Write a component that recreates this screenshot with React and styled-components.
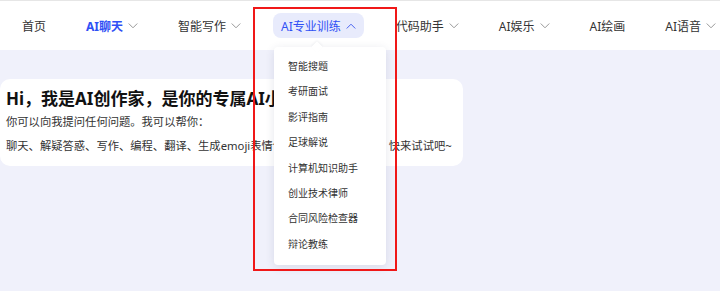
import React from "react";
import styled, { createGlobalStyle } from "styled-components";

const GlobalStyle = createGlobalStyle`
  html, body {
    margin: 0;
    padding: 0;
    background: #f0f1fb;
    font-family: "Noto Sans", "Noto Sans CJK SC", sans-serif;
    overflow: hidden;
  }
`;

const navItems = [
  { label: "首页" },
  { label: "AI聊天", arrow: true, current: true },
  { label: "智能写作", arrow: true },
  { label: "AI专业训练", arrow: true, open: true },
  { label: "代码助手", arrow: true },
  { label: "AI娱乐", arrow: true },
  { label: "AI绘画" },
  { label: "AI语音", arrow: true },
];

const menuItems = [
  "智能搜题",
  "考研面试",
  "影评指南",
  "足球解说",
  "计算机知识助手",
  "创业技术律师",
  "合同风险检查器",
  "辩论教练",
];

const Chevron = ({ up }) => (
  <svg width="10" height="6" viewBox="0 0 10 6" fill="none">
    <path
      d={up ? "M1 5.2 L5 1.2 L9 5.2" : "M1 0.8 L5 4.8 L9 0.8"}
      stroke="currentColor"
      strokeWidth="1"
      strokeLinecap="round"
      strokeLinejoin="round"
    />
  </svg>
);

const App = () => {
  return (
    <Page>
      <GlobalStyle />
      <Header>
        <Nav>
          {navItems.map((item) => (
            <NavItem key={item.label} $current={item.current} $open={item.open}>
              <span>{item.label}</span>
              {item.arrow && (
                <Arrow $open={item.open}>
                  <Chevron up={item.open} />
                </Arrow>
              )}
              {item.open && (
                <Dropdown>
                  {menuItems.map((m) => (
                    <MenuItem key={m}>{m}</MenuItem>
                  ))}
                </Dropdown>
              )}
            </NavItem>
          ))}
        </Nav>
      </Header>
      <Main>
        <Card>
          <Title>Hi，我是AI创作家，是你的专属AI小助手~</Title>
          <Sub>你可以向我提问任何问题。我可以帮你：</Sub>
          <Sub $gap>
            聊天、解疑答惑、写作、编程、翻译、生成emoji表情包、写诗、讲故事等， 快来试试吧~
          </Sub>
        </Card>
      </Main>
      <Highlight />
    </Page>
  );
};

const Page = styled.div`
  position: relative;
  width: 720px;
  height: 291px;
  background: #f0f1fb;
`;

const Header = styled.header`
  height: 49px;
  background: #fff;
  border-top: 1px solid #e6e6e6;
`;

const Nav = styled.nav`
  display: flex;
  align-items: center;
  height: 100%;
  padding-left: 14px;
  gap: 24px;
`;

const NavItem = styled.div`
  position: relative;
  display: flex;
  align-items: center;
  gap: 5px;
  height: 25px;
  padding: 0 8px;
  border-radius: 8px;
  font-size: 12px;
  white-space: nowrap;
  color: ${({ $current, $open }) => ($current || $open ? "#3050f5" : "#333")};
  font-weight: ${({ $current }) => ($current ? 700 : 400)};
  background: ${({ $open }) => ($open ? "#e8ebfc" : "transparent")};
`;

const Arrow = styled.span`
  display: flex;
  color: ${({ $open }) => ($open ? "#4a64f0" : "#999")};
`;

const Dropdown = styled.div`
  position: absolute;
  top: 34px;
  left: 1px;
  width: 112px;
  padding: 7px 0 8px;
  background: #fff;
  border-radius: 4px;
  box-shadow: 0 2px 10px rgba(40, 50, 90, 0.12);
  z-index: 2;
  font-weight: 400;

  &::before {
    content: "";
    position: absolute;
    top: -4px;
    left: 39px;
    width: 8px;
    height: 8px;
    background: #fff;
    transform: rotate(45deg);
    box-shadow: -1px -1px 2px rgba(40, 50, 90, 0.06);
  }
`;

const MenuItem = styled.div`
  height: 25.4px;
  line-height: 25.4px;
  padding-left: 14px;
  font-size: 10px;
  color: #333;
`;

const Main = styled.main`
  padding-top: 29px;
`;

const Card = styled.section`
  height: 87px;
  padding: 8px 0 0 6px;
  box-sizing: border-box;
  width: 463px;
  background: #fff;
  border-radius: 10px;
`;

const Title = styled.h1`
  margin: 0;
  font-size: 17px;
  line-height: 24px;
  font-weight: 700;
  color: #111;
  white-space: nowrap;
  overflow: hidden;
`;

const Sub = styled.p`
  margin: ${({ $gap }) => ($gap ? "4px 0 0" : "1px 0 0")};
  font-size: 11.3px;
  line-height: 20px;
  color: #333;
  white-space: nowrap;
`;

const Highlight = styled.div`
  position: absolute;
  left: 253px;
  top: 7px;
  width: 144px;
  height: 264px;
  box-sizing: border-box;
  border: 2.5px solid #f01818;
  pointer-events: none;
  z-index: 3;
`;

export default App;
